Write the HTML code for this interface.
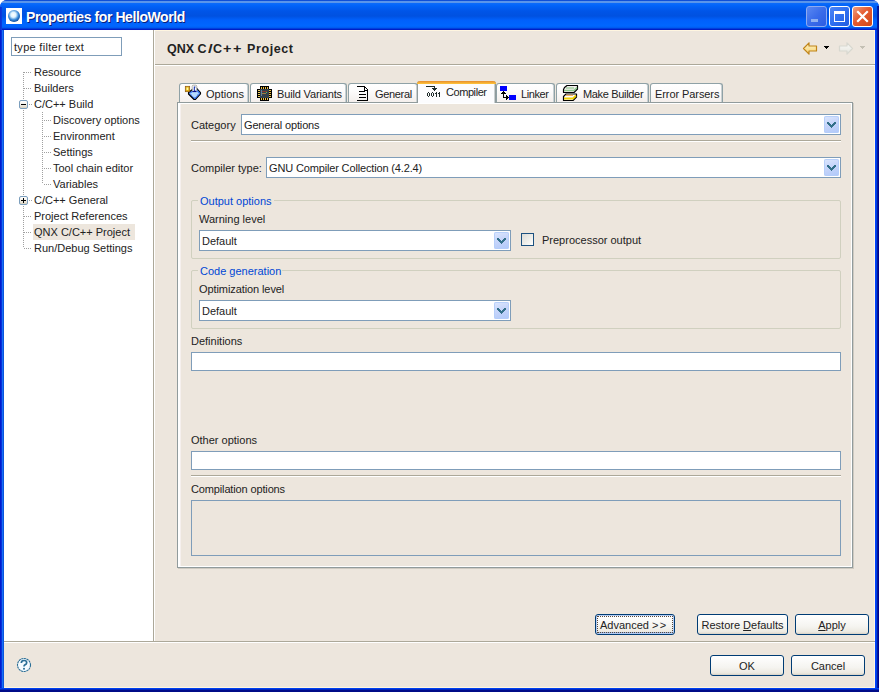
<!DOCTYPE html>
<html><head><meta charset="utf-8">
<style>
*{box-sizing:border-box;margin:0;padding:0}
html,body{width:879px;height:692px;overflow:hidden;background:#fff}
body{position:relative;font-family:"Liberation Sans",sans-serif;font-size:11px;color:#222}
.a{position:absolute}
.t{position:absolute;white-space:nowrap;line-height:13px;height:13px}
#frame{left:0;top:0;width:879px;height:692px;border-radius:7px 7px 0 0;background:#0831d9;overflow:hidden}
#title{left:0;top:0;width:879px;height:30px;border-radius:7px 7px 0 0;
 background:linear-gradient(to bottom,#0d4fd8 0px,#0d4fd8 1px,#5a95ea 1px,#5a95ea 3px,#0b6cfb 3px,#0062f8 6px,#0055e8 11px,#0051e0 16px,#0060fb 20px,#0067ff 26px,#0058ec 28px,#0025cc 29px,#0018c0 30px)}
#lb{left:0;top:30px;width:4px;height:662px;background:linear-gradient(to right,#001ccf 0,#001ccf 1px,#0831d9 1px,#0831d9 2px,#166ff6 2px,#166ff6 3px,#0a55dd 3px)}
#rb{left:875px;top:30px;width:4px;height:662px;background:linear-gradient(to right,#0040ff 0,#0040ff 1px,#0040e0 1px,#0040e0 2px,#001a9c 2px,#001a9c 3px,#00008b 3px)}
#bb{left:0;top:688px;width:879px;height:4px;background:linear-gradient(to bottom,#0040f0 0,#0040f0 1px,#0028c0 1px,#0028c0 2px,#000c88 2px)}
#content{left:4px;top:30px;width:871px;height:658px;background:#ede6dd;border-right:1px solid #fff6e0;border-bottom:1px solid #fff6e0;border-top:1px solid #fff6e0}
#tree{left:4px;top:30px;width:149px;height:611px;background:#fff}
.vl{position:absolute;width:1px;background:repeating-linear-gradient(to bottom,#a0a0a0 0,#a0a0a0 1px,transparent 1px,transparent 2px)}
.hl{position:absolute;height:1px;background:repeating-linear-gradient(to right,#a0a0a0 0,#a0a0a0 1px,transparent 1px,transparent 2px)}
.exp{position:absolute;width:9px;height:9px;border:1px solid #7b9ebd;border-radius:2px;background:linear-gradient(to bottom,#fff 0,#f4f1ea 50%,#d9d1bf 100%)}
.exp:before{content:"";position:absolute;left:1px;top:3px;width:5px;height:1px;background:#000}
.exp.plus:after{content:"";position:absolute;left:3px;top:1px;width:1px;height:5px;background:#000}
.tab{position:absolute;top:83px;height:19px;border:1px solid #8fa1a6;border-bottom:none;border-radius:3px 3px 0 0;background:linear-gradient(to bottom,#fff 0,#fdfcfc 35%,#f4efec 100%);box-shadow:inset -1px 0 0 #c9d0d2}
.tab.sel{top:81px;height:22px;background:#fcfcfe;border-color:#919b9c;border-top:none}
.tab.sel:before{content:"";position:absolute;left:-1px;right:-1px;top:0;height:3px;background:linear-gradient(to bottom,#e68b2c 0,#ffc73c 100%);border-radius:3px 3px 0 0}
.combo{position:absolute;height:21px;border:1px solid #7f9db9;background:#fff}
.combo .btn{position:absolute;right:1px;top:1px;width:15px;height:17px;border-radius:2px;background:linear-gradient(160deg,#dde8fe 0%,#c9d7fb 40%,#bccff9 70%,#afc8fa 100%);box-shadow:inset 0 0 0 1px rgba(180,205,250,0.9)}
.combo .txt{position:absolute;left:2px;top:4px;line-height:13px;white-space:nowrap}
.field{position:absolute;border:1px solid #7f9db9;background:#fff}
.grp{position:absolute;border:1px solid #d0d0bf;border-radius:2px}
.sep{position:absolute;height:2px;border-top:1px solid #aca899;border-bottom:1px solid #fff}
.pbtn{position:absolute;height:21px;border:1px solid #003c74;border-radius:3px;background:linear-gradient(to bottom,#fff 0,#f5f4f0 60%,#ece9e0 90%,#d6d0c5 100%);text-align:center;line-height:20px}
</style></head><body>
<div id="frame" class="a"></div>
<div id="title" class="a"></div>
<div id="lb" class="a"></div>
<div class="a" style="left:0;top:7px;width:2px;height:23px;background:linear-gradient(to right,#0a2fd0,#0b3ce0)"></div>
<div class="a" style="left:877px;top:6px;width:2px;height:24px;background:linear-gradient(to right,#0020b0,#001090)"></div>
<div id="rb" class="a"></div>
<div id="bb" class="a"></div>
<div id="content" class="a"></div>
<div id="tree" class="a"></div>
<!-- sash lines -->
<div class="a" style="left:153px;top:30px;width:1px;height:611px;background:#aca899"></div>
<div class="a" style="left:154px;top:30px;width:1px;height:611px;background:#fff"></div>
<div class="a" style="left:155px;top:64px;width:720px;height:1px;background:#aca899"></div>
<div class="a" style="left:155px;top:65px;width:720px;height:1px;background:#fff"></div>
<div class="a" style="left:4px;top:641px;width:871px;height:1px;background:#aca899"></div>
<div class="a" style="left:4px;top:642px;width:871px;height:1px;background:#fff"></div>

<!-- title bar -->
<div class="a" style="left:6px;top:8px;width:16px;height:16px;background:#fff"></div>
<svg class="a" style="left:6px;top:8px" width="16" height="16"><defs><radialGradient id="gb" cx="45%" cy="40%" r="60%"><stop offset="0" stop-color="#fff"/><stop offset="0.35" stop-color="#e0f4ff"/><stop offset="0.7" stop-color="#3a8ad8"/><stop offset="1" stop-color="#0c4aa0"/></radialGradient></defs><circle cx="8" cy="8" r="6" fill="url(#gb)"/></svg>
<div class="t" style="left:26px;top:9px;font-size:14px;letter-spacing:-0.42px;font-weight:bold;color:#fff;line-height:16px;height:16px;text-shadow:1px 1px 0 #0a1e78">Properties for HelloWorld</div>
<!-- window buttons -->
<div class="a" style="left:806px;top:6px;width:21px;height:21px;border:1px solid #8eaaf0;border-radius:3px;background:linear-gradient(135deg,#5a88f2 0%,#3a6cea 50%,#2c5ce2 100%)"></div>
<div class="a" style="left:811px;top:19px;width:7px;height:3px;background:#8fb0f0"></div>
<div class="a" style="left:829px;top:6px;width:21px;height:21px;border:1px solid #fff;border-radius:3px;background:linear-gradient(135deg,#4d85f5 0%,#2f6ff0 50%,#225ce0 100%)"></div>
<div class="a" style="left:834px;top:11px;width:11px;height:11px;border:1px solid #fff;border-top:3px solid #fff"></div>
<div class="a" style="left:852px;top:6px;width:21px;height:21px;border:1px solid #fff;border-radius:3px;background:linear-gradient(135deg,#f0a080 0%,#e45a30 45%,#d04818 100%)"></div>
<svg class="a" style="left:852px;top:6px" width="21" height="21"><path d="M6 6 L15 15 M15 6 L6 15" stroke="#fff" stroke-width="2.2" stroke-linecap="square"/></svg>

<!-- filter -->
<div class="field" style="left:11px;top:37px;width:111px;height:19px"></div>
<div class="t" style="left:14px;top:41px;letter-spacing:0.3px">type filter text</div>

<!-- tree -->
<div class="vl" style="left:23px;top:72px;height:28px"></div>
<div class="vl" style="left:23px;top:110px;height:87px"></div>
<div class="vl" style="left:23px;top:206px;height:42px"></div>
<div class="vl" style="left:42px;top:112px;height:72px"></div>
<div class="hl" style="left:24px;top:72px;width:8px"></div>
<div class="hl" style="left:24px;top:88px;width:8px"></div>
<div class="hl" style="left:29px;top:104px;width:4px"></div>
<div class="hl" style="left:44px;top:120px;width:8px"></div>
<div class="hl" style="left:44px;top:136px;width:8px"></div>
<div class="hl" style="left:44px;top:152px;width:8px"></div>
<div class="hl" style="left:44px;top:168px;width:8px"></div>
<div class="hl" style="left:44px;top:184px;width:8px"></div>
<div class="hl" style="left:29px;top:200px;width:4px"></div>
<div class="hl" style="left:24px;top:216px;width:8px"></div>
<div class="hl" style="left:24px;top:232px;width:8px"></div>
<div class="hl" style="left:24px;top:248px;width:8px"></div>
<div class="exp" style="left:19px;top:100px"></div>
<div class="exp plus" style="left:19px;top:196px"></div>
<div class="a" style="left:33px;top:224px;width:102px;height:16px;background:#ede6dd"></div>
<div class="t" style="left:34px;top:66px">Resource</div>
<div class="t" style="left:34px;top:82px">Builders</div>
<div class="t" style="left:34px;top:98px">C/C++ Build</div>
<div class="t" style="left:53px;top:114px">Discovery options</div>
<div class="t" style="left:53px;top:130px">Environment</div>
<div class="t" style="left:53px;top:146px">Settings</div>
<div class="t" style="left:53px;top:162px">Tool chain editor</div>
<div class="t" style="left:53px;top:178px">Variables</div>
<div class="t" style="left:34px;top:194px">C/C++ General</div>
<div class="t" style="left:34px;top:210px">Project References</div>
<div class="t" style="left:34px;top:226px">QNX C/C++ Project</div>
<div class="t" style="left:34px;top:242px">Run/Debug Settings</div>

<!-- header -->
<div class="t" style="left:167px;top:42px;font-size:12.5px;font-weight:bold;line-height:15px;height:15px">QNX</div><div class="t" style="left:197.5px;top:42px;font-size:12.5px;font-weight:bold;line-height:15px;height:15px">C</div><div class="t" style="left:207.5px;top:42px;font-size:12.5px;font-weight:bold;line-height:15px;height:15px;transform:scaleX(1.35);transform-origin:0 0">/</div><div class="t" style="left:213px;top:42px;font-size:12.5px;font-weight:bold;line-height:15px;height:15px">C</div><div class="t" style="left:222.5px;top:42px;font-size:12.5px;font-weight:bold;line-height:15px;height:15px;transform:scaleX(1.15);transform-origin:0 0">+</div><div class="t" style="left:232.5px;top:42px;font-size:12.5px;font-weight:bold;line-height:15px;height:15px;transform:scaleX(1.15);transform-origin:0 0">+</div><div class="t" style="left:247px;top:42px;font-size:12.5px;font-weight:bold;line-height:15px;height:15px;letter-spacing:0.6px">Project</div>

<!-- toolbar arrows -->
<svg class="a" style="left:802px;top:41px" width="16" height="15"><defs><linearGradient id="ya" x1="0" y1="0" x2="0" y2="1"><stop offset="0" stop-color="#fff6c8"/><stop offset="1" stop-color="#f6d070"/></linearGradient></defs><path d="M1.5 7.5 L7 1.8 L7 5 L14.5 5 L14.5 10 L7 10 L7 13.2 Z" fill="url(#ya)" stroke="#c08418" stroke-width="1.2" stroke-linejoin="round"/></svg>
<svg class="a" style="left:823px;top:46px" width="7" height="4" shape-rendering="crispEdges" fill="#000"><rect x="1" y="0" width="5" height="1"/><rect x="2" y="1" width="3" height="1"/><rect x="3" y="2" width="1" height="1"/></svg>
<svg class="a" style="left:838px;top:41px" width="16" height="15"><defs><linearGradient id="wa" x1="0" y1="0" x2="0" y2="1"><stop offset="0" stop-color="#fafaf8"/><stop offset="1" stop-color="#e4e4dc"/></linearGradient></defs><path d="M14.5 7.5 L9 1.8 L9 5 L1.5 5 L1.5 10 L9 10 L9 13.2 Z" fill="url(#wa)" stroke="#d8d8d0" stroke-width="1.2" stroke-linejoin="round"/></svg>
<svg class="a" style="left:859px;top:46px" width="7" height="4" shape-rendering="crispEdges" fill="#c4c0b4"><rect x="1" y="0" width="5" height="1"/><rect x="2" y="1" width="3" height="1"/><rect x="3" y="2" width="1" height="1"/></svg>

<!-- tab panel -->
<div class="a" style="left:177px;top:102px;width:676px;height:466px;border:1px solid #919b9c;background:#ede6dd;box-shadow:1px 1px 0 rgba(120,120,110,0.25)"></div>
<div class="a" style="left:178px;top:103px;width:674px;height:464px;border-top:1px solid #fff;border-left:2px solid #fff;border-right:1px solid #fff;border-bottom:1px solid #fff"></div>
<div class="a" style="left:180px;top:104px;width:1px;height:462px;background:#f6f0ee"></div>

<!-- tabs -->
<div class="tab" style="left:179px;width:70px"></div>
<div class="tab" style="left:250px;width:97px"></div>
<div class="tab" style="left:348px;width:70px"></div>
<div class="tab sel" style="left:417px;width:79px"></div>
<div class="tab" style="left:496px;width:59px"></div>
<div class="tab" style="left:556px;width:93px"></div>
<div class="tab" style="left:650px;width:73px"></div>
<div class="t" style="left:206px;top:88px">Options</div>
<div class="t" style="left:277px;top:88px;letter-spacing:-0.15px">Build Variants</div>
<div class="t" style="left:375px;top:88px;letter-spacing:-0.33px">General</div>
<div class="t" style="left:446px;top:86px;letter-spacing:-0.43px">Compiler</div>
<div class="t" style="left:521px;top:88px;letter-spacing:-0.4px">Linker</div>
<div class="t" style="left:583px;top:88px;letter-spacing:-0.33px">Make Builder</div>
<div class="t" style="left:655px;top:88px;letter-spacing:-0.08px">Error Parsers</div>


<!-- tab icons -->
<svg class="a" style="left:184px;top:84px" width="18" height="18">
 <path d="M4.5 8.5 L4.5 10 L10 15.5 L11.5 15.5 L16.5 10 L16.5 8.5 L12 3.5 L11 3.5 Z" fill="#3f7ef2" stroke="#000" stroke-width="1.1" stroke-linejoin="round"/>
 <path d="M6.5 9.5 L10.5 13.3 L14.5 9.3 L11.5 6 Z" fill="#b4dcff"/>
 <path d="M6.5 9.8 L10.5 13.5 L14.8 9.5" fill="none" stroke="#fff" stroke-width="0.9" stroke-dasharray="1 1"/>
 <rect x="8.2" y="1.2" width="4.6" height="6.3" rx="1.2" fill="#fff" stroke="#808070" stroke-width="0.6"/>
 <path d="M11.5 3 L10.3 3 L10.3 7 L11.8 7" fill="none" stroke="#1030b0" stroke-width="1.1"/>
 <path d="M8.5 7.6 L12.5 7.6" stroke="#000080" stroke-width="1"/>
 <rect x="1.3" y="2.3" width="4.4" height="5.4" fill="#e2b010" stroke="#905810" stroke-width="0.7"/>
 <rect x="2.5" y="3.5" width="1.8" height="2.5" fill="#fff8a0"/>
</svg>
<svg class="a" style="left:257px;top:86px" width="15" height="15" shape-rendering="crispEdges">
 <rect x="3" y="0" width="9" height="15" fill="#000"/>
 <rect x="0" y="3" width="15" height="9" fill="#000"/>
 <rect x="4" y="1" width="1" height="2" fill="#f0c040"/><rect x="6" y="1" width="1" height="2" fill="#f0c040"/><rect x="8" y="1" width="1" height="2" fill="#f0c040"/><rect x="10" y="1" width="1" height="2" fill="#f0c040"/>
 <rect x="4" y="12" width="1" height="2" fill="#f0c040"/><rect x="6" y="12" width="1" height="2" fill="#f0c040"/><rect x="8" y="12" width="1" height="2" fill="#f0c040"/><rect x="10" y="12" width="1" height="2" fill="#f0c040"/>
 <rect x="1" y="4" width="2" height="1" fill="#f0d060"/><rect x="1" y="6" width="2" height="1" fill="#f0d060"/><rect x="1" y="8" width="2" height="1" fill="#f0d060"/><rect x="1" y="10" width="2" height="1" fill="#f0d060"/>
 <rect x="12" y="4" width="2" height="1" fill="#f0c040"/><rect x="12" y="6" width="2" height="1" fill="#f0c040"/><rect x="12" y="8" width="2" height="1" fill="#f0c040"/><rect x="12" y="10" width="2" height="1" fill="#f0c040"/>
 <rect x="3" y="3" width="9" height="9" fill="#34404a"/>
 <rect x="4" y="5" width="6" height="1" fill="#8a3a30"/><rect x="5" y="7" width="4" height="1" fill="#a08040"/><rect x="9" y="6" width="1" height="1" fill="#40c060"/><rect x="4" y="4" width="1" height="6" fill="#6080a0"/>
</svg>
<svg class="a" style="left:356px;top:85px" width="13" height="17" shape-rendering="crispEdges" fill="#000">
 <rect x="1" y="1" width="8" height="1"/>
 <rect x="8" y="1" width="1" height="5"/>
 <rect x="9" y="2" width="1" height="1"/><rect x="10" y="3" width="1" height="1"/><rect x="11" y="4" width="1" height="1"/>
 <rect x="11" y="4" width="1" height="12"/>
 <rect x="1" y="15" width="11" height="1"/>
 <rect x="3" y="6" width="6" height="1"/><rect x="9" y="5" width="2" height="1"/>
 <rect x="3" y="9" width="7" height="1"/>
 <rect x="3" y="12" width="7" height="1"/>
</svg>
<svg class="a" style="left:425px;top:85px" width="16" height="13" shape-rendering="crispEdges" fill="#1e2a2a">
 <rect x="1" y="1" width="9" height="1"/>
 <rect x="9" y="1" width="1" height="5"/>
 <rect x="7" y="3" width="5" height="1"/><rect x="8" y="4" width="3" height="1"/>
 <rect x="3" y="7" width="1" height="1"/><rect x="2" y="8" width="1" height="3"/><rect x="4" y="8" width="1" height="3"/><rect x="3" y="11" width="1" height="1"/><rect x="7" y="7" width="1" height="1"/><rect x="6" y="8" width="1" height="3"/><rect x="8" y="8" width="1" height="3"/><rect x="7" y="11" width="1" height="1"/>
 <rect x="11" y="7" width="1" height="5"/><rect x="10" y="8" width="1" height="1"/>
 <rect x="14" y="7" width="1" height="5"/><rect x="13" y="8" width="1" height="1"/>
</svg>
<svg class="a" style="left:499px;top:85px" width="18" height="16" shape-rendering="crispEdges">
 <rect x="1" y="1" width="7" height="5" fill="#0000ff"/>
 <rect x="10" y="10" width="7" height="5" fill="#0000ff"/>
 <g fill="#000">
 <rect x="4" y="6" width="1" height="7"/>
 <rect x="3" y="7" width="3" height="1"/><rect x="2" y="8" width="5" height="1"/>
 <rect x="4" y="12" width="5" height="1"/><rect x="9" y="12" width="1" height="1"/>
 <rect x="7" y="10" width="1" height="5"/><rect x="8" y="11" width="1" height="3"/>
 </g>
</svg>
<svg class="a" style="left:561px;top:84px" width="18" height="18">
 <path d="M3.5 3.5 L6 1.5 L16.5 1.5 L16.5 5 L13 8.5 L2.5 8.5 L2.5 5.5 Z" fill="#f4eeee" stroke="#000" stroke-width="1.2" stroke-linejoin="round"/>
 <path d="M3 6.5 L13 6.5 L16 3.5" fill="none" stroke="#8cc88c" stroke-width="1.6"/>
 <path d="M5 4 L13 4" stroke="#7cc07c" stroke-width="1"/>
 <path d="M3.5 11.5 L5 10 L15.5 10 L15.5 13 L12 16.5 L2.5 16.5 L2.5 12.5 Z" fill="#fff" stroke="#000" stroke-width="1.2" stroke-linejoin="round"/>
 <path d="M3 14.5 L12 14.5 L15 11.5" fill="none" stroke="#f0d000" stroke-width="1.8"/>
 <path d="M5 11.3 L12 11.3" stroke="#f0a040" stroke-width="1"/>
</svg>

<!-- form -->
<div class="t" style="left:191px;top:119px">Category</div>
<div class="combo" style="left:241px;top:114px;width:600px"><div class="txt" style="letter-spacing:-0.15px">General options</div><div class="btn"><svg width="15" height="17" style="position:absolute;left:0;top:0" fill="#33708a"><rect x="3" y="6" width="2" height="1"/><rect x="10" y="6" width="2" height="1"/><rect x="3" y="7" width="3" height="1"/><rect x="9" y="7" width="3" height="1"/><rect x="4" y="8" width="3" height="1"/><rect x="8" y="8" width="3" height="1"/><rect x="5" y="9" width="5" height="1"/><rect x="6" y="10" width="3" height="1"/><rect x="7" y="11" width="1" height="1"/></svg></div></div>
<div class="sep" style="left:191px;top:140px;width:650px"></div>
<div class="t" style="left:191px;top:162px">Compiler type:</div>
<div class="combo" style="left:266px;top:157px;width:575px"><div class="txt" style="letter-spacing:-0.15px">GNU Compiler Collection (4.2.4)</div><div class="btn"><svg width="15" height="17" style="position:absolute;left:0;top:0" fill="#33708a"><rect x="3" y="6" width="2" height="1"/><rect x="10" y="6" width="2" height="1"/><rect x="3" y="7" width="3" height="1"/><rect x="9" y="7" width="3" height="1"/><rect x="4" y="8" width="3" height="1"/><rect x="8" y="8" width="3" height="1"/><rect x="5" y="9" width="5" height="1"/><rect x="6" y="10" width="3" height="1"/><rect x="7" y="11" width="1" height="1"/></svg></div></div>

<div class="grp" style="left:191px;top:200px;width:650px;height:59px"></div>
<div class="a" style="left:198px;top:195px;width:76px;height:13px;background:#ede6dd"></div>
<div class="t" style="left:200px;top:195px;color:#0046d5">Output options</div>
<div class="t" style="left:199px;top:213px">Warning level</div>
<div class="combo" style="left:199px;top:230px;width:312px"><div class="txt">Default</div><div class="btn"><svg width="15" height="17" style="position:absolute;left:0;top:0" fill="#33708a"><rect x="3" y="6" width="2" height="1"/><rect x="10" y="6" width="2" height="1"/><rect x="3" y="7" width="3" height="1"/><rect x="9" y="7" width="3" height="1"/><rect x="4" y="8" width="3" height="1"/><rect x="8" y="8" width="3" height="1"/><rect x="5" y="9" width="5" height="1"/><rect x="6" y="10" width="3" height="1"/><rect x="7" y="11" width="1" height="1"/></svg></div></div>
<div class="a" style="left:521px;top:233px;width:13px;height:13px;border:1px solid #1c5180;background:linear-gradient(135deg,#dcdcd7 0%,#f0f0ec 60%,#fff 100%)"></div>
<div class="t" style="left:542px;top:234px">Preprocessor output</div>

<div class="grp" style="left:191px;top:270px;width:650px;height:59px"></div>
<div class="a" style="left:198px;top:265px;width:84px;height:13px;background:#ede6dd"></div>
<div class="t" style="left:200px;top:265px;color:#0046d5">Code generation</div>
<div class="t" style="left:199px;top:283px;letter-spacing:-0.09px">Optimization level</div>
<div class="combo" style="left:199px;top:300px;width:312px"><div class="txt">Default</div><div class="btn"><svg width="15" height="17" style="position:absolute;left:0;top:0" fill="#33708a"><rect x="3" y="6" width="2" height="1"/><rect x="10" y="6" width="2" height="1"/><rect x="3" y="7" width="3" height="1"/><rect x="9" y="7" width="3" height="1"/><rect x="4" y="8" width="3" height="1"/><rect x="8" y="8" width="3" height="1"/><rect x="5" y="9" width="5" height="1"/><rect x="6" y="10" width="3" height="1"/><rect x="7" y="11" width="1" height="1"/></svg></div></div>

<div class="t" style="left:191px;top:335px">Definitions</div>
<div class="field" style="left:191px;top:352px;width:650px;height:19px"></div>
<div class="t" style="left:191px;top:434px">Other options</div>
<div class="field" style="left:191px;top:451px;width:650px;height:19px"></div>
<div class="sep" style="left:191px;top:475px;width:650px"></div>
<div class="t" style="left:191px;top:483px;letter-spacing:-0.14px">Compilation options</div>
<div class="field" style="left:191px;top:500px;width:650px;height:56px;background:#ede6dd"></div>

<!-- buttons -->
<div class="pbtn" style="left:595px;top:614px;width:80px;text-align:left;padding-left:4px;box-shadow:inset 0 0 0 1px #b6cdf3,inset 0 -1px 0 1px #9ab6e8"><div class="a" style="left:1px;top:1px;width:76px;height:17px;border:1px dotted #5a4a3a"></div>Advanced <span style="letter-spacing:1.3px">&gt;&gt;</span></div>
<div class="pbtn" style="left:697px;top:614px;width:91px">Restore <u>D</u>efaults</div>
<div class="pbtn" style="left:795px;top:614px;width:74px"><u>A</u>pply</div>
<div class="pbtn" style="left:710px;top:655px;width:74px">OK</div>
<div class="pbtn" style="left:791px;top:655px;width:74px">Cancel</div>

<!-- help -->
<svg class="a" style="left:16px;top:657px" width="16" height="16"><circle cx="8" cy="8" r="6.5" fill="#f4fbff" stroke="#2a6e96" stroke-width="1.1" stroke-dasharray="2.2 0.5"/><path d="M5.3 6.1 Q5.3 3.5 8 3.5 Q10.7 3.5 10.7 5.7 Q10.7 7.2 8.9 7.9 Q8 8.3 8 9.6" fill="none" stroke="#2a6e96" stroke-width="1.7"/><rect x="7.1" y="10.9" width="1.8" height="1.7" fill="#2a6e96"/></svg>
</body></html>
